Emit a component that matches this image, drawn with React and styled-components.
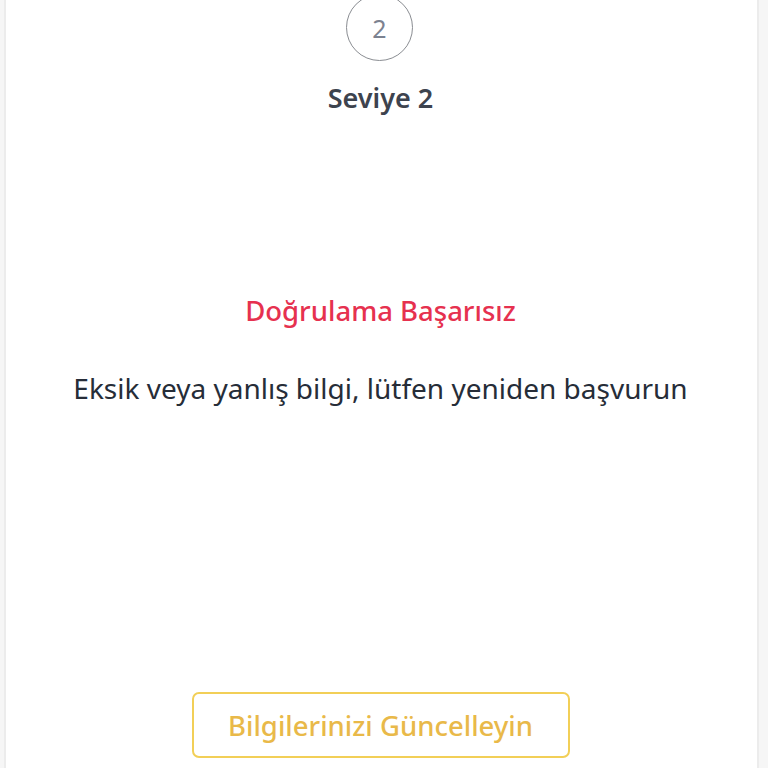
import React from "react";
import styled, { createGlobalStyle } from "styled-components";

const Global = createGlobalStyle`
  html, body {
    margin: 0;
    padding: 0;
    background: #f6f6f6;
    font-family: "Noto Sans", "Open Sans", sans-serif;
  }
  #root {
    height: 768px;
    overflow: hidden;
  }
`;

const Card = styled.section`
  box-sizing: border-box;
  margin-left: 4px;
  width: 755px;
  height: 800px;
  margin-top: -6px;
  background: #fff;
  border-left: 2px solid #ececec;
  border-right: 2px solid #ececec;
  display: flex;
  flex-direction: column;
  align-items: center;
`;

const StepCircle = styled.div`
  box-sizing: border-box;
  width: 67px;
  height: 67px;
  border-radius: 50%;
  border: 1.5px solid #8a8d92;
  display: flex;
  align-items: center;
  justify-content: center;
  color: #7c8290;
  font-size: 25px;
  margin-left: -4px;
`;

const LevelTitle = styled.h2`
  margin: 20px 0 0 -2px;
  font-size: 27px;
  font-weight: 600;
  color: #3d434e;
  line-height: 34px;
`;

const StatusTitle = styled.h3`
  margin: 178px 0 0 -2px;
  font-size: 27.5px;
  font-weight: 500;
  color: #e6314f;
  line-height: 36px;
`;

const Message = styled.p`
  margin: 40px 0 0 -2px;
  font-size: 28px;
  font-weight: 400;
  color: #262d38;
  line-height: 38px;
`;

const UpdateButton = styled.button`
  box-sizing: border-box;
  margin: 285px 0 0 -2px;
  width: 378px;
  height: 66px;
  border: 2px solid #f2cf57;
  border-radius: 7px;
  background: #fff;
  color: #e9b949;
  font-family: inherit;
  font-size: 27.5px;
  font-weight: 500;
  cursor: pointer;
`;

export default function App() {
  return (
    <>
      <Global />
      <Card>
        <StepCircle>2</StepCircle>
        <LevelTitle>Seviye 2</LevelTitle>
        <StatusTitle>Doğrulama Başarısız</StatusTitle>
        <Message>Eksik veya yanlış bilgi, lütfen yeniden başvurun</Message>
        <UpdateButton>Bilgilerinizi Güncelleyin</UpdateButton>
      </Card>
    </>
  );
}
